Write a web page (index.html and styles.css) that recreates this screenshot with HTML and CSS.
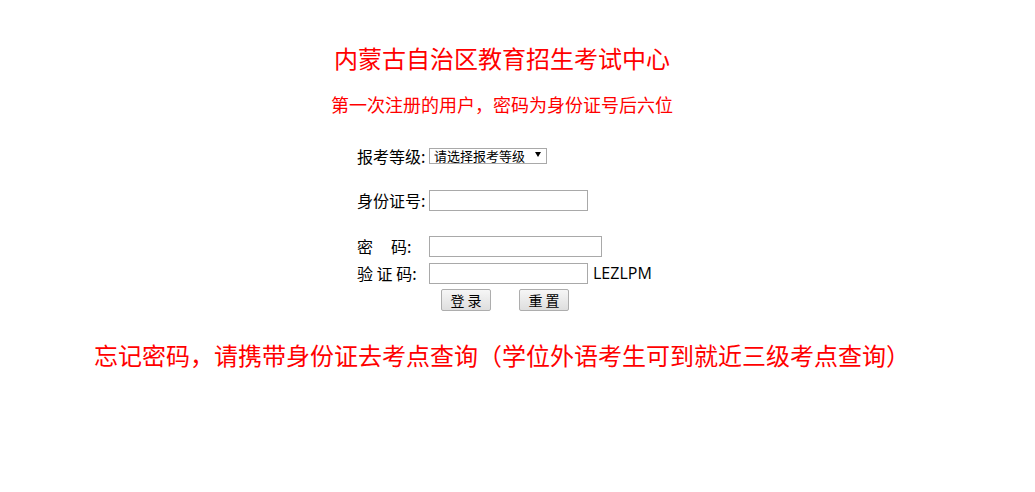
FILE: index.html
```html
<!DOCTYPE html>
<html lang="zh-CN">
<head>
<meta charset="utf-8">
<title>内蒙古自治区教育招生考试中心</title>
<link rel="stylesheet" href="styles.css">
</head>
<body>
<div class="page">
  <h1 class="title">内蒙古自治区教育招生考试中心</h1>
  <p class="subtitle">第一次注册的用户，密码为身份证号后六位</p>
  <form class="form">
    <div class="row r1">
      <span class="label">报考等级:</span>
      <span class="select-wrap"><select class="select"><option>请选择报考等级</option></select></span>
    </div>
    <div class="row r2">
      <span class="label">身份证号:</span>
      <input class="input w159" type="text">
    </div>
    <div class="row r3">
      <span class="label">密&nbsp;&nbsp;&nbsp;&nbsp;&nbsp;码:</span>
      <input class="input w173" type="password">
    </div>
    <div class="row r4">
      <span class="label">验&nbsp;证&nbsp;码:</span>
      <input class="input w159" type="text">
      <span class="code">LEZLPM</span>
    </div>
    <div class="row r5">
      <button class="btn" type="button">登&nbsp;录</button>
      <button class="btn" type="button">重&nbsp;置</button>
    </div>
  </form>
  <p class="notice">忘记密码，请携带身份证去考点查询（学位外语考生可到就近三级考点查询）</p>
</div>
</body>
</html>
```
FILE: styles.css
```css
html, body {
  margin: 0;
  padding: 0;
  background: #fff;
}
body {
  font-family: "Noto Sans CJK SC", "Noto Sans", sans-serif;
  color: #000;
}
.page {
  width: 1004px;
  text-align: center;
}
.title {
  margin: 0;
  padding-top: 40px;
  font-size: 24px;
  font-weight: normal;
  line-height: 36px;
  color: #ff0000;
}
.subtitle {
  margin: 13px 0 0;
  font-size: 18px;
  line-height: 30px;
  color: #ff0000;
}
.form {
  margin: 21px 0 0 357px;
  text-align: left;
  display: flex;
  flex-direction: column;
}
.row {
  display: flex;
  align-items: center;
  height: 32px;
  font-size: 16px;
}
.label {
  width: 72px;
  flex: none;
  white-space: nowrap;
  font-size: 16px;
}
.r2 { margin-top: 12px; }
.r3 { margin-top: 14px; }
.r4 { height: 22px; }
.r5 { margin-top: 5px; height: 22px; padding-left: 84px; gap: 28px; }
.select-wrap {
  position: relative;
  display: flex;
}
.select {
  -webkit-appearance: none;
  appearance: none;
  width: 118px;
  height: 16px;
  box-sizing: border-box;
  border: 1px solid #a9a9a9;
  border-radius: 0;
  background: #fff;
  font-family: "Noto Sans CJK SC", sans-serif;
  font-size: 13px;
  line-height: 14px;
  padding: 0 0 0 4px;
  margin: 0;
  color: #000;
}
.select-wrap::after {
  content: "";
  position: absolute;
  right: 6px;
  top: 4px;
  border-left: 3px solid transparent;
  border-right: 3px solid transparent;
  border-top: 5px solid #000;
  pointer-events: none;
}
.input {
  box-sizing: border-box;
  height: 21px;
  border: 1px solid #a9a9a9;
  margin: 0;
  padding: 0 2px;
  background: #fff;
}
.w159 { width: 159px; }
.w173 { width: 173px; }
.code {
  margin-left: 5px;
  font-family: "Open Sans", sans-serif;
  font-size: 16px;
}
.btn {
  width: 50px;
  height: 22px;
  box-sizing: border-box;
  margin: 0;
  padding: 0;
  border: 1px solid #adadad;
  border-radius: 2px;
  background: linear-gradient(#f6f6f6, #dedede);
  font-family: "Noto Sans CJK SC", sans-serif;
  font-size: 14px;
  line-height: 20px;
  color: #000;
}
.notice {
  margin: 26px 0 0;
  font-size: 24px;
  line-height: 36px;
  color: #ff0000;
}
```
